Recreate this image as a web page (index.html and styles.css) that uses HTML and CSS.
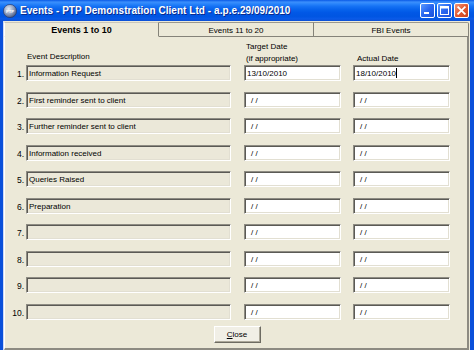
FILE: index.html
```html
<!DOCTYPE html>
<html>
<head>
<meta charset="utf-8">
<title>Events</title>
<link rel="stylesheet" href="styles.css">
</head>
<body>
<div class="window">
  <div class="titlebar">
    <svg class="appicon" width="14" height="14" viewBox="0 0 14 14">
      <defs>
        <radialGradient id="ig" cx="40%" cy="35%" r="70%">
          <stop offset="0" stop-color="#e6ecf6"/>
          <stop offset="0.55" stop-color="#8f9fbf"/>
          <stop offset="1" stop-color="#3f4f78"/>
        </radialGradient>
      </defs>
      <circle cx="7" cy="7" r="6.6" fill="url(#ig)" stroke="#24346a" stroke-width="0.6"/>
      <text x="7" y="8.6" text-anchor="middle" class="icontext">PTP</text>
    </svg>
    <span class="title">Events - PTP Demonstration Client Ltd - a.p.e.29/09/2010</span>
    <div class="capbtns">
      <span class="capbtn">
        <svg width="15" height="15" viewBox="0 0 15 15"><rect x="4" y="9" width="5" height="2" fill="#fff"/></svg>
      </span>
      <span class="capbtn">
        <svg width="15" height="15" viewBox="0 0 15 15"><rect x="3.5" y="3.5" width="8" height="8" fill="none" stroke="#fff" stroke-width="1"/><rect x="3.5" y="3.5" width="8" height="2" fill="#fff"/></svg>
      </span>
      <span class="capbtn close">
        <svg width="15" height="15" viewBox="0 0 15 15"><path d="M4.2 4.2 L10.8 10.8 M10.8 4.2 L4.2 10.8" stroke="#fff" stroke-width="1.8" stroke-linecap="square"/></svg>
      </span>
    </div>
  </div>
  <div class="frame">
    <div class="client">
      <div class="tabs">
        <div class="tab active">Events 1 to 10</div>
        <div class="tab">Events 11 to 20</div>
        <div class="tab last">FBI Events</div>
      </div>
      <div class="panel">
        <div class="cols head">
          <div></div>
          <div class="hd hd-desc">Event Description</div>
          <div class="hd hd-target">Target Date<br>(if appropriate)</div>
          <div class="hd hd-actual">Actual Date</div>
        </div>
        <div class="cols rows">
          <div class="num">1.</div><div class="field desc">Information Request</div><div class="field date">13/10/2010</div><div class="field date">18/10/2010<span class="caret"></span></div>
          <div class="num">2.</div><div class="field desc">First reminder sent to client</div><div class="field date empty">/ /</div><div class="field date empty">/ /</div>
          <div class="num">3.</div><div class="field desc">Further reminder sent to client</div><div class="field date empty">/ /</div><div class="field date empty">/ /</div>
          <div class="num">4.</div><div class="field desc">Information received</div><div class="field date empty">/ /</div><div class="field date empty">/ /</div>
          <div class="num">5.</div><div class="field desc">Queries Raised</div><div class="field date empty">/ /</div><div class="field date empty">/ /</div>
          <div class="num">6.</div><div class="field desc">Preparation</div><div class="field date empty">/ /</div><div class="field date empty">/ /</div>
          <div class="num">7.</div><div class="field desc"></div><div class="field date empty">/ /</div><div class="field date empty">/ /</div>
          <div class="num">8.</div><div class="field desc"></div><div class="field date empty">/ /</div><div class="field date empty">/ /</div>
          <div class="num">9.</div><div class="field desc"></div><div class="field date empty">/ /</div><div class="field date empty">/ /</div>
          <div class="num">10.</div><div class="field desc"></div><div class="field date empty">/ /</div><div class="field date empty">/ /</div>
        </div>
        <div class="actions">
          <button class="btn"><u>C</u>lose</button>
        </div>
      </div>
    </div>
  </div>
</div>
</body>
</html>
```

FILE: styles.css
```css
* { box-sizing: border-box; }

html, body {
  margin: 0;
  padding: 0;
  background: #ffffff;
}

body {
  font-family: "Liberation Sans", Arial, sans-serif;
  font-size: 8px;
  color: #000;
}

.window {
  width: 474px;
  height: 350px;
  overflow: hidden;
  display: flex;
  flex-direction: column;
}

/* ---------- title bar ---------- */
.titlebar {
  height: 21px;
  flex: none;
  display: flex;
  align-items: center;
  padding-left: 3px;
  background: linear-gradient(to bottom,
    #0a5ae6 0%, #3b8ffc 10%, #2a85fb 18%, #1572f4 30%,
    #0763ec 45%, #0158e6 60%, #0055e2 78%, #0a5ae8 90%, #0c4fd4 100%);
}

.appicon {
  flex: none;
  display: block;
}

.icontext {
  font-family: "Liberation Sans", Arial, sans-serif;
  font-size: 4.2px;
  font-weight: bold;
  fill: #ffffff;
}

.title {
  margin-left: 3px;
  font-size: 10px;
  font-weight: bold;
  color: #ffffff;
  text-shadow: 1px 1px 0 #0b2a8c;
  white-space: nowrap;
  letter-spacing: 0.05px;
}

.capbtns {
  margin-left: auto;
  margin-right: 5px;
  display: flex;
  gap: 2px;
}

.capbtn {
  width: 15px;
  height: 15px;
  border: 1px solid #ffffff;
  border-radius: 2px;
  background: linear-gradient(135deg, #5c9bff 0%, #2866f0 50%, #1c50d8 100%);
  display: block;
  position: relative;
  overflow: hidden;
}

.capbtn svg {
  display: block;
  margin: -1px;
}

.capbtn.close {
  background: linear-gradient(135deg, #f0957a 0%, #e25a33 50%, #c8421c 100%);
}

/* ---------- frame ---------- */
.frame {
  flex: 1;
  border-left: 3px solid #0a50da;
  border-right: 4px solid #0a50da;
  display: flex;
  flex-direction: column;
}

.client {
  flex: 1;
  background: #ece9d8;
  padding: 1px 1px 0 1px;
  display: flex;
  flex-direction: column;
  box-shadow: inset 1px 0 0 #cfd9f2;
}

/* ---------- tabs ---------- */
.tabs {
  display: flex;
  height: 15px;
  flex: none;
}

.tab {
  width: 155px;
  height: 15px;
  border-top: 1px solid #9a988e;
  border-right: 1px solid #858379;
  border-bottom: 1px solid #858379;
  text-align: center;
  line-height: 13px;
  padding-top: 1px;
  font-size: 8px;
  background: #ece9d8;
}

.tab.last {
  width: 155px;
  border-right: 1px solid #858379;
  border-top-right-radius: 2px;
}

.tab.active {
  border-left: 1px solid #ffffff;
  border-top: 1px solid #c9c6ba;
  border-bottom-color: #ece9d8;
  font-weight: bold;
  font-size: 9px;
}

/* ---------- panel ---------- */
.panel {
  flex: 1;
  border-left: 1px solid #ffffff;
  border-right: 2px solid #8d8b82;
  border-bottom: 2px solid #8d8b82;
  padding-top: 4px;
  padding-bottom: 5px;
  display: flex;
  flex-direction: column;
}

.cols {
  display: grid;
  grid-template-columns: 21px 218px 109px 97px;
}

.head {
  height: 24px;
}

.hd {
  line-height: 12px;
  white-space: nowrap;
}

.hd-desc {
  align-self: end;
  margin-bottom: 2px;
  padding-left: 1px;
}

.hd-target {
  padding-left: 2px;
}

.hd-actual {
  align-self: end;
  padding-left: 4px;
}

.rows {
  grid-auto-rows: 16px;
  row-gap: 10.5px;
}

.num {
  text-align: right;
  padding-right: 2px;
  align-self: end;
  line-height: 14px;
  font-size: 8.5px;
}

.field {
  height: 16px;
  border-style: solid;
  border-width: 1px;
  border-color: #8e8c83 #ffffff #ffffff #8e8c83;
  box-shadow: inset 1px 1px 0 #5b5a55, inset -1px -1px 0 #e2dfd2;
  line-height: 13px;
  padding-left: 2px;
  padding-top: 1px;
  white-space: pre;
  overflow: hidden;
}

.desc {
  width: 205px;
  background: #ebe8d9;
}

.date {
  width: 97px;
  background: #ffffff;
}

.date.empty {
  padding-left: 6px;
}

.caret {
  display: inline-block;
  width: 1px;
  height: 10px;
  background: #000;
  vertical-align: -2px;
}

.actions {
  margin-top: 6.5px;
  display: flex;
  justify-content: center;
  padding-left: 2px;
}

.btn {
  width: 47px;
  height: 17px;
  padding: 0;
  font-family: "Liberation Sans", Arial, sans-serif;
  font-size: 8px;
  color: #000;
  background: #f1efe6;
  border: 1px solid;
  border-color: #ffffff #6d6b62 #6d6b62 #ffffff;
  box-shadow: inset -1px -1px 0 #aca899;
  border-radius: 0;
}
```
